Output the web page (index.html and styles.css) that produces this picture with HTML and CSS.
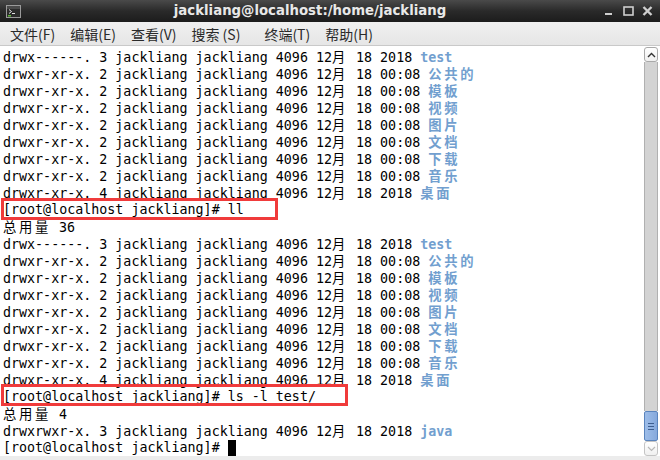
FILE: index.html
```html
<!DOCTYPE html>
<html>
<head>
<meta charset="utf-8">
<link rel="stylesheet" href="styles.css">
</head>
<body>
<div class="window">
  <div class="titlebar">
    <div class="ticon">
      <svg width="15" height="13" viewBox="0 0 15 13">
        <rect x="0.5" y="0.5" width="14" height="12" fill="#2b2b2b" stroke="#9a9a9a"/>
        <rect x="1" y="1" width="13" height="3" fill="#4a4a4a"/>
        <path d="M3 4.5 L5.5 6.5 L3 8.5" fill="none" stroke="#e0e0e0" stroke-width="1"/>
        <rect x="6" y="8" width="3" height="1" fill="#e0e0e0"/>
        <rect x="2" y="10" width="3" height="1.5" fill="#5fb83a"/>
      </svg>
    </div>
    <div class="title">jackliang@localhost:/home/jackliang</div>
    <div class="wbtns">
      <svg width="10" height="10" viewBox="0 0 10 10"><rect x="0" y="7" width="7" height="2" fill="#cfcfcf"/></svg>
      <svg width="11" height="10" viewBox="0 0 11 10"><rect x="1" y="1" width="9" height="8" fill="none" stroke="#cfcfcf" stroke-width="1.6"/></svg>
      <svg width="11" height="10" viewBox="0 0 11 10"><path d="M1.5 1 L9.5 9 M9.5 1 L1.5 9" stroke="#cfcfcf" stroke-width="2.4"/></svg>
    </div>
  </div>
  <div class="menubar">
    <span class="mi">文件(F)</span>
    <span class="mi">编辑(E)</span>
    <span class="mi">查看(V)</span>
    <span class="mi mi-s">搜索 (S)</span>
    <span class="mi">终端(T)</span>
    <span class="mi">帮助(H)</span>
  </div>
  <div class="body">
    <div class="term">
      <div class="line">drwx------. 3 jackliang jackliang 4096 12<span class="cj">月</span> 18 2018 <span class="dir">test</span></div>
      <div class="line">drwxr-xr-x. 2 jackliang jackliang 4096 12<span class="cj">月</span> 18 00:08 <span class="dir cj">公共的</span></div>
      <div class="line">drwxr-xr-x. 2 jackliang jackliang 4096 12<span class="cj">月</span> 18 00:08 <span class="dir cj">模板</span></div>
      <div class="line">drwxr-xr-x. 2 jackliang jackliang 4096 12<span class="cj">月</span> 18 00:08 <span class="dir cj">视频</span></div>
      <div class="line">drwxr-xr-x. 2 jackliang jackliang 4096 12<span class="cj">月</span> 18 00:08 <span class="dir cj">图片</span></div>
      <div class="line">drwxr-xr-x. 2 jackliang jackliang 4096 12<span class="cj">月</span> 18 00:08 <span class="dir cj">文档</span></div>
      <div class="line">drwxr-xr-x. 2 jackliang jackliang 4096 12<span class="cj">月</span> 18 00:08 <span class="dir cj">下载</span></div>
      <div class="line">drwxr-xr-x. 2 jackliang jackliang 4096 12<span class="cj">月</span> 18 00:08 <span class="dir cj">音乐</span></div>
      <div class="line">drwxr-xr-x. 4 jackliang jackliang 4096 12<span class="cj">月</span> 18 2018 <span class="dir cj">桌面</span></div>
      <div class="line">[root@localhost jackliang]# ll</div>
      <div class="line"><span class="cj">总用量</span> 36</div>
      <div class="line">drwx------. 3 jackliang jackliang 4096 12<span class="cj">月</span> 18 2018 <span class="dir">test</span></div>
      <div class="line">drwxr-xr-x. 2 jackliang jackliang 4096 12<span class="cj">月</span> 18 00:08 <span class="dir cj">公共的</span></div>
      <div class="line">drwxr-xr-x. 2 jackliang jackliang 4096 12<span class="cj">月</span> 18 00:08 <span class="dir cj">模板</span></div>
      <div class="line">drwxr-xr-x. 2 jackliang jackliang 4096 12<span class="cj">月</span> 18 00:08 <span class="dir cj">视频</span></div>
      <div class="line">drwxr-xr-x. 2 jackliang jackliang 4096 12<span class="cj">月</span> 18 00:08 <span class="dir cj">图片</span></div>
      <div class="line">drwxr-xr-x. 2 jackliang jackliang 4096 12<span class="cj">月</span> 18 00:08 <span class="dir cj">文档</span></div>
      <div class="line">drwxr-xr-x. 2 jackliang jackliang 4096 12<span class="cj">月</span> 18 00:08 <span class="dir cj">下载</span></div>
      <div class="line">drwxr-xr-x. 2 jackliang jackliang 4096 12<span class="cj">月</span> 18 00:08 <span class="dir cj">音乐</span></div>
      <div class="line">drwxr-xr-x. 4 jackliang jackliang 4096 12<span class="cj">月</span> 18 2018 <span class="dir cj">桌面</span></div>
      <div class="line">[root@localhost jackliang]# ls -l test/</div>
      <div class="line"><span class="cj">总用量</span> 4</div>
      <div class="line">drwxrwxr-x. 3 jackliang jackliang 4096 12<span class="cj">月</span> 18 2018 <span class="dir">java</span></div>
      <div class="line">[root@localhost jackliang]# <span class="cursor"></span></div>
    </div>
    <div class="sbar">
      <div class="sbtn">
        <svg width="9" height="6" viewBox="0 0 9 6"><path d="M1 5 L4.5 1.5 L8 5" fill="none" stroke="#333" stroke-width="1.4"/></svg>
      </div>
      <div class="track"></div>
      <div class="thumb"><span></span><span></span><span></span></div>
      <div class="sbtn sbtn-down">
        <svg width="9" height="6" viewBox="0 0 9 6"><path d="M1 1 L4.5 4.5 L8 1" fill="none" stroke="#b8b8b8" stroke-width="1.2"/></svg>
      </div>
    </div>
  </div>
  <div class="bottom"></div>
  <div class="mark mark1"></div>
  <div class="mark mark2"></div>
</div>
</body>
</html>
```

FILE: styles.css
```css
html, body {
  margin: 0;
  padding: 0;
  background: #ffffff;
}
.window {
  position: relative;
  width: 660px;
  height: 460px;
  overflow: hidden;
  background: #ececec;
  display: flex;
  flex-direction: column;
}
.titlebar {
  height: 22px;
  flex: none;
  display: flex;
  align-items: center;
  background: linear-gradient(#4a4a4a, #2a2a2a 50%, #1c1c1c);
}
.ticon {
  width: 26px;
  flex: none;
  display: flex;
  justify-content: flex-start;
  padding-left: 6px;
  box-sizing: border-box;
}
.ticon svg { display: block; }
.title {
  flex: 1;
  text-align: center;
  font-family: "DejaVu Sans", sans-serif;
  font-weight: bold;
  font-size: 13.3px;
  color: #e8e8e8;
  line-height: 22px;
  white-space: nowrap;
}
.wbtns {
  width: 66px;
  flex: none;
  display: flex;
  align-items: center;
  gap: 8px;
  padding-left: 11px;
  box-sizing: border-box;
}
.wbtns svg { display: block; }
.menubar {
  height: 24px;
  flex: none;
  box-sizing: border-box;
  border-bottom: 1px solid #c9c9c9;
  background: linear-gradient(#f0f0f0, #e6e6e6);
  display: flex;
  align-items: center;
  padding-left: 10px;
  gap: 15px;
  font-family: "Noto Sans CJK SC", "DejaVu Sans", sans-serif;
  font-size: 14px;
  color: #2a2a2a;
}
.mi { white-space: pre; line-height: 20px; }
.mi-s { margin-right: 9px; }
.body {
  flex: none;
  height: 410px;
  display: flex;
  background: #ffffff;
}
.term {
  flex: 1;
  padding: 2px 0 0 3px;
  font-family: "DejaVu Sans Mono", "Noto Sans CJK SC", monospace;
  font-size: 13.33px;
  color: #000;
  overflow: hidden;
}
.line {
  height: 17px;
  line-height: 17px;
  white-space: pre;
}
.cj {
  font-family: "Noto Sans CJK SC", sans-serif;
  letter-spacing: 2.67px;
}
.dir {
  color: #729fcf;
  font-weight: bold;
}
.cursor {
  display: inline-block;
  width: 8px;
  height: 16px;
  background: #000;
  vertical-align: -4px;
}
.sbar {
  width: 16px;
  flex: none;
  display: flex;
  flex-direction: column;
  padding-top: 1px;
  box-sizing: border-box;
  background: #ffffff;
}
.sbtn {
  height: 15px;
  flex: none;
  width: 14px;
  box-sizing: border-box;
  border: 1px solid #a9a9a9;
  border-radius: 3px;
  background: linear-gradient(#ffffff, #f0f0f0);
  display: flex;
  align-items: center;
  justify-content: center;
}
.sbtn-down { border-color: #c4c4c4; }
.track {
  flex: 1;
  width: 14px;
  box-sizing: border-box;
  background: #d3d3d3;
  border-left: 1px solid #b0b0b0;
  border-right: 1px solid #b0b0b0;
}
.thumb {
  height: 30px;
  width: 14px;
  flex: none;
  box-sizing: border-box;
  border: 1px solid #5a84bd;
  border-radius: 2px;
  background: linear-gradient(90deg, #9dbde9, #86a9dc);
  display: flex;
  flex-direction: column;
  align-items: center;
  justify-content: center;
  gap: 2px;
}
.thumb span {
  display: block;
  width: 6px;
  height: 1px;
  background: #3e5f90;
}
.bottom {
  flex: 1;
  background: #ececec;
}
.mark {
  position: absolute;
  border: 3px solid #f03b3b;
  box-sizing: border-box;
}
.mark1 {
  left: 1px;
  top: 198px;
  width: 277px;
  height: 22px;
}
.mark2 {
  left: 1px;
  top: 384px;
  width: 347px;
  height: 22px;
}
```
